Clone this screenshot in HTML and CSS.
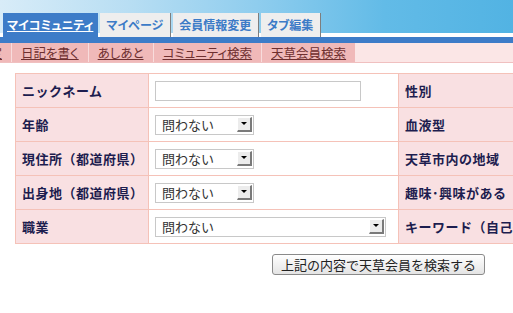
FILE: index.html
```html
<!DOCTYPE html>
<html lang="ja">
<head>
<meta charset="utf-8">
<title>天草会員検索</title>
<link rel="stylesheet" href="styles.css">
</head>
<body>
<div class="page">
  <div class="header">
    <ul class="tabs">
      <li class="tab tab-active"><a href="#">マイコミュニティ</a></li>
      <li class="tab"><a href="#">マイページ</a></li>
      <li class="tab"><a href="#">会員情報変更</a></li>
      <li class="tab"><a href="#">タブ編集</a></li>
    </ul>
  </div>
  <div class="subnav">
    <ul class="subnav-list">
      <li class="sub-item sub-first"><a href="#">設定</a></li>
      <li class="sub-item"><a href="#">日記を書く</a></li>
      <li class="sub-item"><a href="#">あしあと</a></li>
      <li class="sub-item"><a href="#">コミュニティ検索</a></li>
      <li class="sub-item"><a href="#">天草会員検索</a></li>
    </ul>
  </div>
  <div class="content">
    <table class="search">
      <colgroup><col class="c-label"><col class="c-value"><col class="c-label2"></colgroup>
      <tr>
        <th>ニックネーム</th>
        <td><input class="text" type="text"></td>
        <th>性別</th>
      </tr>
      <tr>
        <th>年齢</th>
        <td><span class="sel"><span class="sel-text">問わない</span><span class="sel-btn"><span class="tri"></span></span></span></td>
        <th>血液型</th>
      </tr>
      <tr>
        <th>現住所（都道府県）</th>
        <td><span class="sel"><span class="sel-text">問わない</span><span class="sel-btn"><span class="tri"></span></span></span></td>
        <th>天草市内の地域</th>
      </tr>
      <tr>
        <th>出身地（都道府県）</th>
        <td><span class="sel"><span class="sel-text">問わない</span><span class="sel-btn"><span class="tri"></span></span></span></td>
        <th>趣味･興味がある</th>
      </tr>
      <tr>
        <th>職業</th>
        <td><span class="sel sel-wide"><span class="sel-text">問わない</span><span class="sel-btn"><span class="tri"></span></span></span></td>
        <th>キーワード（自己紹介）</th>
      </tr>
    </table>
    <div class="actions">
      <button class="submit" type="button">上記の内容で天草会員を検索する</button>
    </div>
  </div>
</div>
</body>
</html>
```
FILE: styles.css
```css
html, body {
  margin: 0;
  padding: 0;
  background: #fff;
}
body {
  font-family: "Noto Sans CJK JP", "Noto Sans", sans-serif;
}
.page {
  width: 513px;
  height: 313px;
  overflow: hidden;
}
ul {
  list-style: none;
  margin: 0;
  padding: 0;
}

/* header */
.header {
  height: 43px;
  background:
    linear-gradient(#3d7cc8, #3d7cc8) 0 37px / 100% 6px no-repeat,
    linear-gradient(#fff, #fff) 0 33px / 100% 4px no-repeat,
    linear-gradient(to right, #d8ecf8 0%, #b8def3 25%, #8fcdee 50%, #62bbe7 75%, #52b3e3 100%);
}
.tabs {
  display: flex;
  align-items: flex-start;
  gap: 2px;
  padding: 13px 0 0 3px;
}
.tab {
  height: 24px;
  background: #eeeeee;
  border-right: 1px solid #7e7e7e;
  display: flex;
  align-items: center;
}
.tab a {
  display: block;
  padding: 0 7px 0 6px;
  font-size: 12px;
  font-weight: bold;
  color: #3c7bc7;
  text-decoration: none;
  font-feature-settings: "palt";
  letter-spacing: 0;
  line-height: 16px;
}
.tab-active {
  height: 30px;
  background: #3d7cc8;
  border-right: none;
  align-items: flex-start;
  padding-top: 4px;
  box-sizing: border-box;
}
.tab-active a {
  color: #fff;
  text-decoration: underline;
  padding: 0 5px 0 4px;
}

/* sub navigation */
.subnav {
  height: 19px;
  background: #fbe6e6;
  border-bottom: 1px solid #f0c0c0;
}
.subnav-list {
  display: flex;
  height: 19px;
  margin-left: -32px;
}
.sub-item {
  background: #f0b9b9;
  border-left: 1px solid #f8dcdc;
  display: flex;
  align-items: center;
}
.sub-first {
  border-left: none;
}
.sub-item a {
  display: block;
  padding: 0 9px;
  font-size: 12.5px;
  line-height: 16px;
  color: #6e2f2f;
  text-decoration: underline;
  font-feature-settings: "palt";
}

/* content */
.content {
  padding: 10px 0 0 15px;
}
.search {
  border-collapse: collapse;
  table-layout: fixed;
  width: 583px;
}
.c-label { width: 133px; }
.c-value { width: 250px; }
.c-label2 { width: 200px; }
.search th,
.search td {
  border: 1px solid #f5c2b8;
  height: 34px;
  padding: 0 0 0 6px;
  box-sizing: border-box;
  text-align: left;
  vertical-align: middle;
  white-space: nowrap;
}
.search th {
  background: #f9e0e2;
  color: #1d1d4f;
  font-size: 13px;
  font-weight: bold;
  letter-spacing: 0.5px;
}
.search td {
  background: #fff;
}
.text {
  display: block;
  width: 206px;
  height: 20px;
  box-sizing: border-box;
  border: 1px solid #c8c8c8;
  margin: 0;
  padding: 0 4px;
  font: inherit;
}
.sel {
  position: relative;
  display: flex;
  align-items: center;
  width: 99px;
  height: 20px;
  box-sizing: border-box;
  border: 1px solid #c8c8c8;
  background: #fff;
}
.sel-wide {
  width: 231px;
}
.sel-text {
  padding-left: 6px;
  font-size: 13px;
  color: #333;
  line-height: 16px;
}
.sel-btn {
  position: absolute;
  right: 1px;
  top: 1px;
  width: 15px;
  height: 15px;
  box-sizing: border-box;
  background: #ececec;
  border-top: 1px solid #fff;
  border-left: 1px solid #fff;
  border-right: 2px solid #7a7a7a;
  border-bottom: 2px solid #7a7a7a;
  display: flex;
  align-items: center;
  justify-content: center;
}
.tri {
  width: 0;
  height: 0;
  border-left: 3px solid transparent;
  border-right: 3px solid transparent;
  border-top: 3px solid #000;
}

.actions {
  padding: 7px 0 0 257px;
}
.submit {
  height: 21px;
  padding: 0 8px;
  border: 1px solid #8a8a8a;
  border-radius: 3px;
  background: linear-gradient(#ffffff, #e4e4e4);
  font-family: "Noto Sans CJK JP", sans-serif;
  font-size: 13px;
  line-height: 17px;
  color: #222;
}
```
